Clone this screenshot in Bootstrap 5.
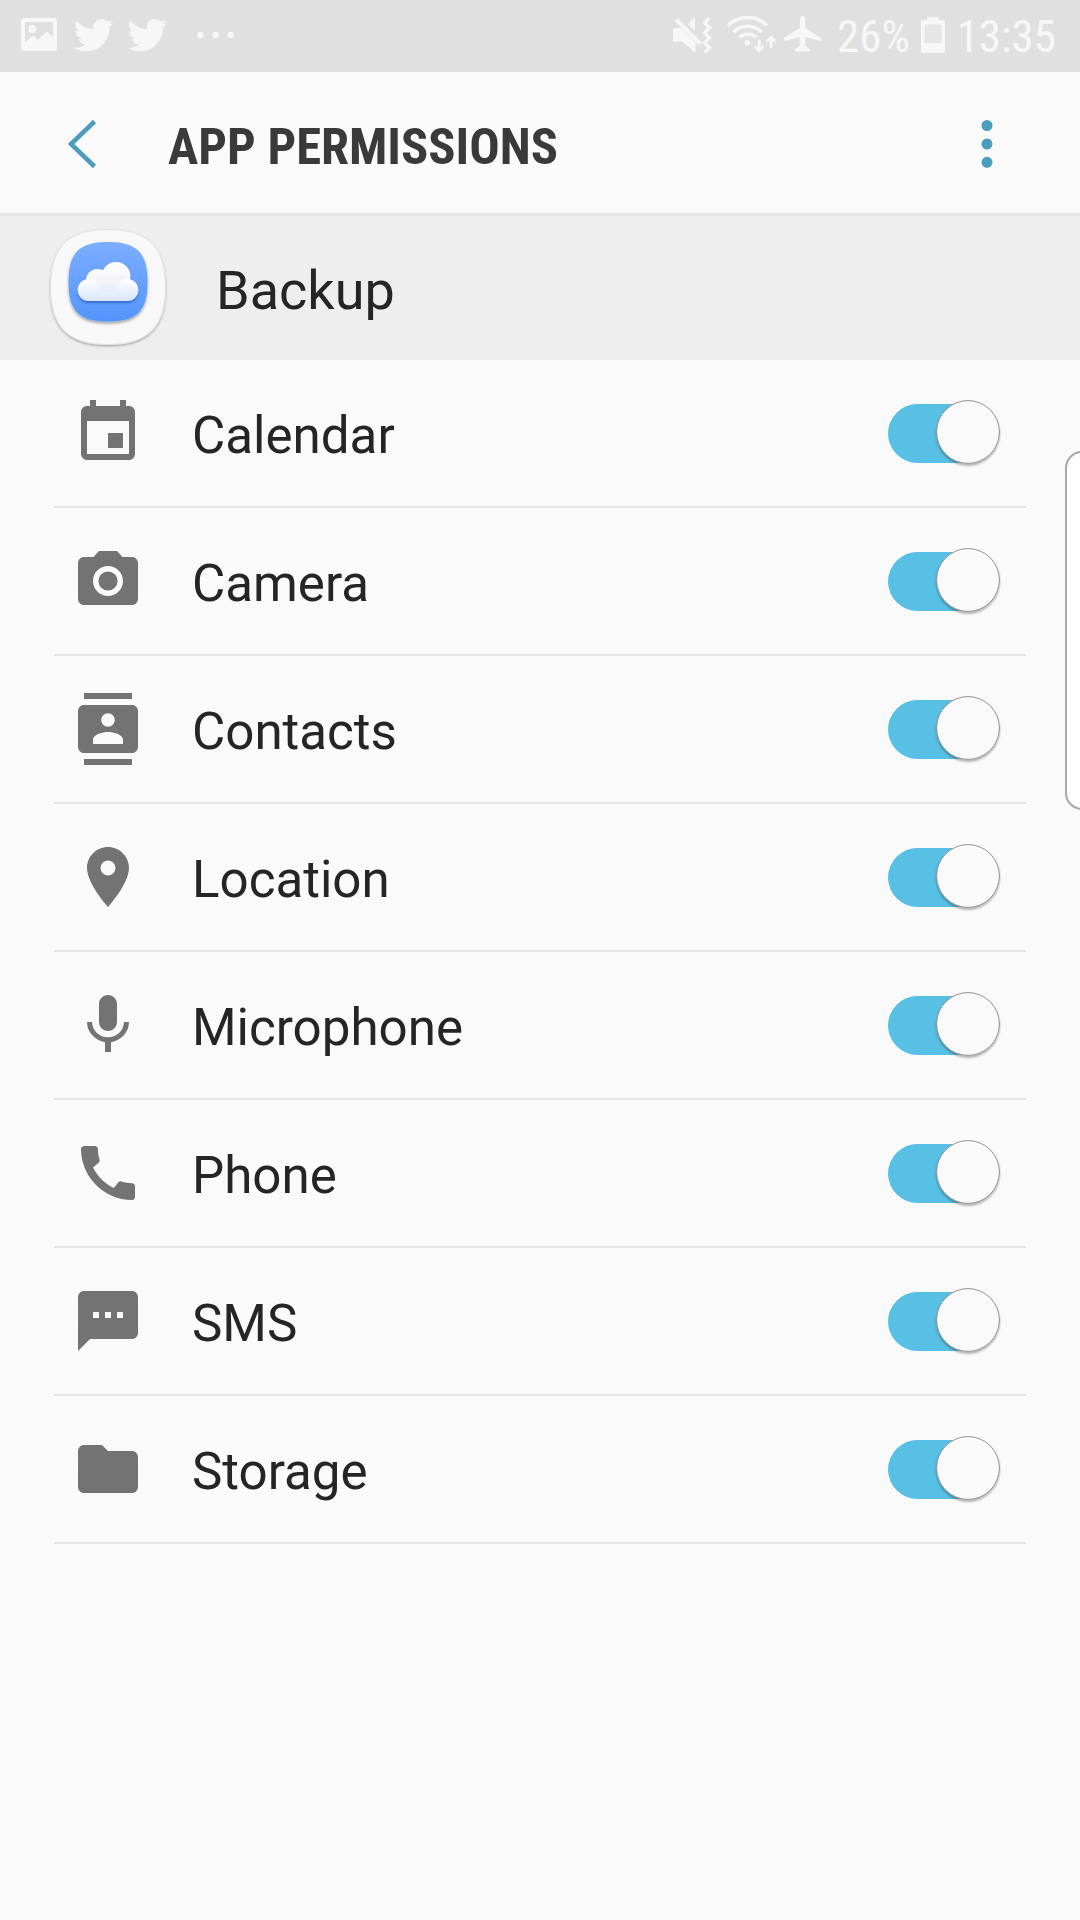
<!DOCTYPE html>
<html lang="en">
<head>
<meta charset="utf-8">
<meta name="viewport" content="width=device-width, initial-scale=1">
<title>App permissions</title>
<link href="https://cdn.jsdelivr.net/npm/bootstrap@5.3.0/dist/css/bootstrap.min.css" rel="stylesheet">
<style>
  body { background: #fafafa; color: #252525; font-family: Roboto, "Liberation Sans", sans-serif; line-height: 1.2; min-height: 1920px; overflow: hidden; }
  .status-bar { height: 72px; padding-right: 24px; background: #e0e0e0; color: #f7f7f7; font-family: "Roboto Condensed", Roboto, sans-serif; font-size: 45px; line-height: 72px; }
  .status-bar svg, .app-bar svg, .perm-row svg, .app-row svg { display: block; flex: none; }
  .status-text { padding-top: 2px; }
  .status-clock { margin-left: 12px; }
  .app-bar { height: 144px; border-bottom: 3px solid #e5e5e5; }
  .app-title { font-family: "Roboto Condensed", Roboto, sans-serif; font-weight: 700; font-size: 50.6px; color: #3a3a3a; padding-top: 10px; }
  .app-row { height: 144px; background: #eee; font-size: 54px; }
  .app-name { padding-top: 6px; }
  .perm-list { margin: 0 54px; }
  .perm-row { height: 148px; border: 0; border-bottom: 2px solid #e4e4e4; background: transparent; color: inherit; padding: 0 25px 0 18px; font-size: 51.1px; }
  .perm-icon { fill: #737373; width: 72px; height: 72px; }
  .perm-name { margin-left: 48px; padding-top: 6px; }
  .toggle { width: 113px; height: 68px; margin-left: auto; }
  .edge-handle { top: 451px; right: -20px; width: 35px; height: 359px; background: #fff; border: 2px solid #a8a8a8; border-radius: 17px; }
</style>
<script src="https://cdn.jsdelivr.net/npm/bootstrap@5.3.0/dist/js/bootstrap.bundle.min.js"></script>
</head>
<body class="position-relative">

<svg width="0" height="0" class="position-absolute">
  <defs>
    <linearGradient id="tile" x1="0" y1="0" x2="0" y2="1"><stop offset="0" stop-color="#7cadff"/><stop offset="1" stop-color="#5495fd"/></linearGradient>
    <linearGradient id="puff" gradientUnits="userSpaceOnUse" x1="0" y1="46" x2="0" y2="85"><stop offset="0" stop-color="#fff"/><stop offset=".5" stop-color="#f3f4f7"/><stop offset="1" stop-color="#d9e5fb"/></linearGradient>
    <linearGradient id="puffside" gradientUnits="userSpaceOnUse" x1="0" y1="63" x2="0" y2="85"><stop offset="0" stop-color="#fff"/><stop offset="1" stop-color="#d9e5fb"/></linearGradient>
    <filter id="soft" x="-20%" y="-20%" width="140%" height="150%"><feDropShadow dx="0" dy="1.500" stdDeviation="1.200" flood-color="#000" flood-opacity=".3"/></filter>
    <filter id="tileshade" x="-20%" y="-20%" width="140%" height="150%"><feDropShadow dx="0" dy="2" stdDeviation="1.800" flood-color="#000" flood-opacity=".35"/></filter>
    <filter id="cloudshade" x="-20%" y="-20%" width="140%" height="150%"><feDropShadow dx="0" dy="2" stdDeviation="1" flood-color="#1c4fa8" flood-opacity=".6"/></filter>
    <filter id="thumbshade" x="-20%" y="-20%" width="140%" height="150%"><feDropShadow dx="0" dy="2" stdDeviation="1.300" flood-color="#000" flood-opacity=".3"/></filter>
    <symbol id="switch-on" viewBox="0 0 113 68">
      <rect x="0" y="5" width="100" height="59" rx="29.500" fill="#57c0e4"/>
      <circle cx="80" cy="33" r="31.400" fill="#fafafa" stroke="#929292" stroke-width="1" filter="url(#thumbshade)"/>
    </symbol>
    <symbol id="bird" viewBox="0 0 24 24"><path d="M23.950 4.570a10 10 0 0 1-2.820.770 4.960 4.960 0 0 0 2.160-2.720c-.950.550-2 .960-3.130 1.180a4.920 4.920 0 0 0-8.380 4.480C7.690 8.100 4.070 6.130 1.640 3.160a4.820 4.820 0 0 0-.670 2.480c0 1.710.870 3.210 2.190 4.100a4.900 4.900 0 0 1-2.230-.620v.060a4.920 4.920 0 0 0 3.950 4.830 5 5 0 0 1-2.210.080 4.940 4.940 0 0 0 4.600 3.420A9.870 9.870 0 0 1 0 19.540a14 14 0 0 0 7.550 2.210c9.050 0 14-7.500 14-13.980 0-.210 0-.420-.020-.630a9.940 9.940 0 0 0 2.420-2.570z"/></symbol>
  </defs>
</svg>

<header class="status-bar d-flex align-items-center">
  <svg width="540" height="72" viewBox="0 0 540 72" fill="#f7f7f7">
    <path fill-rule="evenodd" d="M24 18h30a3 3 0 0 1 3 3v27a3 3 0 0 1-3 3H24a3 3 0 0 1-3-3V21a3 3 0 0 1 3-3zM25 22v20.500l8-7 5 4 9-8 6 6V22z"/>
    <circle cx="32.300" cy="29" r="4"/>
    <use href="#bird" x="74" y="15.500" width="39.500" height="39.500"/>
    <use href="#bird" x="127.500" y="15.500" width="39.500" height="39.500"/>
    <circle cx="200.500" cy="35" r="3.200"/><circle cx="215.700" cy="35" r="3.200"/><circle cx="230.700" cy="35" r="3.200"/>
  </svg>
  <svg width="297" height="72" viewBox="540 0 297 72" fill="#f7f7f7">
    <path d="M674 28h7L695.500 42.500v10L682 41.500h-8a1 1 0 0 1-1-1V29a1 1 0 0 1 1-1zM688 24l7-7V31z"/>
    <path d="M676 19.500 700.500 44" fill="none" stroke="#f7f7f7" stroke-width="4"/>
    <path d="M709.500 18l-5 4.800 5 5-5 5 5 5-5 5 5 5-5 4.700" fill="none" stroke="#f7f7f7" stroke-width="3.300"/>
    <g fill="none" stroke="#f7f7f7" stroke-width="3.500"><path d="M728 25.500a27.500 27.500 0 0 1 39 0M733.500 32a20 20 0 0 1 28 0M739.500 37.500a12.500 12.500 0 0 1 17 0"/></g>
    <circle cx="747.300" cy="42.700" r="2.800"/>
    <path d="M757.700 39.500h3v8l3-2.700v3.200l-4.500 4.500-4.700-4.500v-3.200l3.200 2.700zM769.800 48h3v-7.500l2.900 2.500v-3.300L771.300 35.500l-4.600 4.200V43l3.100-2.500z"/>
    <path d="M802.600 16c1.700 0 2.700 2 2.700 4.500V28l15.200 9.500c1 .8 1.200 2 .3 3.500l-15.500-4v8.500l5 4v2h-15.500v-2l4.900-4V37L784.500 41c-.9-1.500-.7-2.700.3-3.500L799.900 28v-7.500c0-2.500 1-4.500 2.700-4.500z"/>
  </svg>
  <span class="status-text">26%</span>
  <svg class="ms-auto" width="24" height="72" viewBox="0 0 24 72" fill="#f7f7f7"><path d="M3.500 24.500h17V43h-17z" fill="#e6e6e6"/><path fill-rule="evenodd" d="M7 17h10a1 1 0 0 1 1 1v2h4.500a1.500 1.500 0 0 1 1.500 1.500v30a1.500 1.500 0 0 1-1.500 1.500h-21A1.500 1.500 0 0 1 0 51.500v-30A1.500 1.500 0 0 1 1.500 20H6v-2a1 1 0 0 1 1-1zM3.500 24.500V43h17V24.500z"/></svg>
  <span class="status-text status-clock">13:35</span>
</header>

<nav class="app-bar d-flex align-items-center">
  <svg width="168" height="141" viewBox="0 0 168 141" fill="none" stroke="#4a9dbd" stroke-width="4.500"><path d="M94.500 49.500 71 72l23.500 22.500"/></svg>
  <h1 class="app-title mb-0">APP PERMISSIONS</h1>
  <svg class="ms-auto" width="100" height="141" viewBox="0 0 100 141" fill="#4a9dbd"><circle cx="7" cy="53.500" r="5.500"/><circle cx="7" cy="72" r="5.500"/><circle cx="7" cy="90.300" r="5.500"/></svg>
</nav>

<section class="app-row d-flex align-items-center">
  <svg width="216" height="144" viewBox="0 0 216 144">
    <path d="M108 13.500c40 0 57.500 17.500 57.500 57.500S148 128.500 108 128.500s-57.500-17.500-57.500-57.500S68 13.500 108 13.500z" fill="#f8f8f8" stroke="#dedede" stroke-width=".8" filter="url(#soft)"/>
    <path d="M108 26c29 0 39.500 11 39.500 40S137 105.500 108 105.500 68.500 95 68.500 66 79 26 108 26z" fill="url(#tile)" filter="url(#tileshade)"/>
    <g filter="url(#cloudshade)">
      <g fill="url(#puff)"><circle cx="97.500" cy="64.500" r="11.500"/><circle cx="116" cy="60.500" r="14.500"/><rect x="89" y="66" width="38" height="19"/></g>
      <g fill="url(#puffside)"><rect x="88.700" y="76" width="39" height="9"/><circle cx="88.700" cy="74" r="11"/><circle cx="127.300" cy="74" r="11"/></g>
    </g>
  </svg>
  <span class="app-name">Backup</span>
</section>

<main class="perm-list list-group rounded-0">
  <label class="perm-row list-group-item d-flex align-items-center">
    <svg class="perm-icon" viewBox="0 0 24 24"><path d="M17 12h-5v5h5v-5zM16 1v2H8V1H6v2H5c-1.110 0-1.990.9-1.990 2L3 19a2 2 0 0 0 2 2h14c1.100 0 2-.9 2-2V5c0-1.100-.9-2-2-2h-1V1h-2zm3 18H5V8h14v11z"/></svg>
    <span class="perm-name">Calendar</span>
    <svg class="toggle"><use href="#switch-on"/></svg>
  </label>
  <label class="perm-row list-group-item d-flex align-items-center">
    <svg class="perm-icon" viewBox="0 0 24 24"><circle cx="12" cy="12" r="3.200"/><path d="M9 2L7.170 4H4c-1.100 0-2 .9-2 2v12c0 1.100.9 2 2 2h16c1.100 0 2-.9 2-2V6c0-1.100-.9-2-2-2h-3.170L15 2H9zm3 15c-2.760 0-5-2.240-5-5s2.240-5 5-5 5 2.240 5 5-2.240 5-5 5z"/></svg>
    <span class="perm-name">Camera</span>
    <svg class="toggle"><use href="#switch-on"/></svg>
  </label>
  <label class="perm-row list-group-item d-flex align-items-center">
    <svg class="perm-icon" viewBox="0 0 24 24"><path d="M20 0H4v2h16V0zM4 24h16v-2H4v2zM20 4H4c-1.100 0-2 .9-2 2v12c0 1.100.9 2 2 2h16c1.100 0 2-.9 2-2V6c0-1.100-.9-2-2-2zm-8 2.750c1.240 0 2.250 1.010 2.250 2.250s-1.010 2.250-2.250 2.250S9.750 10.240 9.750 9 10.760 6.750 12 6.750zM17 17H7v-1.500c0-1.670 3.330-2.500 5-2.500s5 .83 5 2.500V17z"/></svg>
    <span class="perm-name">Contacts</span>
    <svg class="toggle"><use href="#switch-on"/></svg>
  </label>
  <label class="perm-row list-group-item d-flex align-items-center">
    <svg class="perm-icon" viewBox="0 0 24 24"><path d="M12 2C8.130 2 5 5.130 5 9c0 5.250 7 13 7 13s7-7.750 7-13c0-3.870-3.130-7-7-7zm0 9.500a2.500 2.500 0 0 1 0-5 2.500 2.500 0 0 1 0 5z"/></svg>
    <span class="perm-name">Location</span>
    <svg class="toggle"><use href="#switch-on"/></svg>
  </label>
  <label class="perm-row list-group-item d-flex align-items-center">
    <svg class="perm-icon" viewBox="0 0 24 24"><path d="M12 14c1.660 0 2.990-1.340 2.990-3L15 5c0-1.660-1.340-3-3-3S9 3.340 9 5v6c0 1.660 1.340 3 3 3zm5.300-3c0 3-2.540 5.100-5.300 5.100S6.700 14 6.700 11H5c0 3.410 2.720 6.230 6 6.720V21h2v-3.280c3.280-.48 6-3.300 6-6.720h-1.700z"/></svg>
    <span class="perm-name">Microphone</span>
    <svg class="toggle"><use href="#switch-on"/></svg>
  </label>
  <label class="perm-row list-group-item d-flex align-items-center">
    <svg class="perm-icon" viewBox="0 0 24 24"><path d="M20.010 15.380c-1.230 0-2.420-.2-3.530-.56-.35-.12-.74-.03-1.010.24l-1.570 1.970c-2.830-1.350-5.480-3.900-6.890-6.830l1.950-1.660c.27-.28.350-.67.240-1.020-.37-1.110-.56-2.300-.56-3.530 0-.54-.45-.99-.99-.99H4.190C3.650 3 3 3.240 3 3.990 3 13.280 10.730 21 20.010 21c.71 0 .99-.63.99-1.180v-3.450c0-.54-.45-.99-.99-.99z"/></svg>
    <span class="perm-name">Phone</span>
    <svg class="toggle"><use href="#switch-on"/></svg>
  </label>
  <label class="perm-row list-group-item d-flex align-items-center">
    <svg class="perm-icon" viewBox="0 0 24 24"><path d="M20 2H4c-1.100 0-1.990.9-1.990 2L2 22l4-4h14c1.100 0 2-.9 2-2V4c0-1.100-.9-2-2-2zM9 11H7V9h2v2zm4 0h-2V9h2v2zm4 0h-2V9h2v2z"/></svg>
    <span class="perm-name">SMS</span>
    <svg class="toggle"><use href="#switch-on"/></svg>
  </label>
  <label class="perm-row list-group-item d-flex align-items-center">
    <svg class="perm-icon" viewBox="0 0 24 24"><path d="M10 4H4c-1.100 0-1.990.9-1.990 2L2 18c0 1.100.9 2 2 2h16c1.100 0 2-.9 2-2V8c0-1.100-.9-2-2-2h-8l-2-2z"/></svg>
    <span class="perm-name">Storage</span>
    <svg class="toggle"><use href="#switch-on"/></svg>
  </label>
</main>

<div class="edge-handle position-absolute"></div>
</body>
</html>
